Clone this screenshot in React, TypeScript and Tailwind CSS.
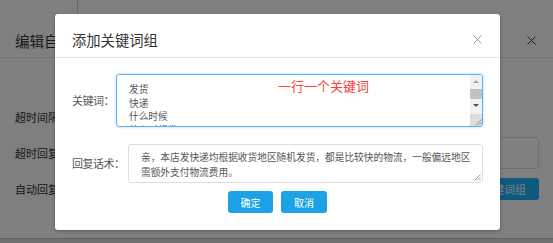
import { ReactNode } from "react";

const KEYWORDS = ["发货", "快递", "什么时候", "什么时候发"];

function Cross({ color }: { color: string }) {
  return (
    <svg width="9" height="9" viewBox="0 0 9 9" className="block">
      <path d="M0.5 0.5 L8.5 8.5 M8.5 0.5 L0.5 8.5" stroke={color} strokeWidth="1" fill="none" />
    </svg>
  );
}

function Grip() {
  return (
    <svg width="8" height="8" viewBox="0 0 8 8" className="block">
      <path d="M7.5 1.5 L1.5 7.5 M7.5 4 L4 7.5 M7.5 6.5 L6.5 7.5" stroke="#8a8a8a" strokeWidth="0.8" fill="none" />
    </svg>
  );
}

function FormRow({ label, children, className = "" }: { label: string; children?: ReactNode; className?: string }) {
  return (
    <div className={`flex items-center pl-[15px] pr-[14px] ${className}`}>
      <span className="text-[11px] text-[#333] whitespace-nowrap">{label}</span>
      {children}
    </div>
  );
}

export default function App() {
  return (
    <div className="relative w-[553px] h-[243px] overflow-hidden bg-white font-['Noto_Sans_CJK_SC','Liberation_Sans',sans-serif] flex flex-col">
      {/* page behind the dialog */}
      <div className="h-[14px] flex shrink-0">
        <div className="w-[78px] border-r border-[#d0d0d0]" />
      </div>
      <div className="h-[225px] shrink-0 border-b border-[#c4c4c4] flex flex-col">
        <div className="h-[44px] border-b border-[#e5e5e5] flex items-center justify-between pt-[10px] pl-[15px] pr-[17px]">
          <span className="text-[14.5px] text-[#333] whitespace-nowrap">编辑自动回复</span>
          <Cross color="#444" />
        </div>
        <FormRow label="超时间隔" className="h-[18px] mt-[50px]" />
        <FormRow label="超时回复" className="h-[32px] mt-[11px]">
          <div className="ml-auto w-[200px] h-[32px] border border-[#ddd] rounded-[3px]" />
        </FormRow>
        <FormRow label="自动回复" className="h-[22px] mt-[9px]">
          <div className="ml-auto h-[22px] px-[13px] rounded-[3px] bg-[#1ab4ff] text-white text-[11px] flex items-center">
            添加关键词组
          </div>
        </FormRow>
      </div>
      <div className="flex-1 bg-[#dedede]" />

      {/* backdrop */}
      <div className="absolute inset-0 bg-black/50" />

      {/* dialog */}
      <div className="absolute left-[55px] top-[14px] w-[445px] h-[216px] bg-white rounded-[3px] shadow-[0_1px_3px_rgba(0,0,0,0.3)] flex flex-col">
        <div className="h-[44px] shrink-0 border-b border-[#e5e5e5] flex items-center justify-between pt-[8px] pl-[17px] pr-[18px]">
          <span className="text-[14.3px] text-[#333] whitespace-nowrap">添加关键词组</span>
          <Cross color="#9a9a9a" />
        </div>

        <div className="flex flex-col pt-[16px] pl-[17px]">
          <div className="flex items-center">
            <span className="w-[44px] text-[11px] tracking-[-0.5px] text-[#555] whitespace-nowrap">关键词：</span>
            <div className="relative w-[367px] h-[53px] border border-[#66afe9] rounded-[3px] shadow-[0_0_3px_rgba(102,175,233,0.6)] flex overflow-hidden">
              <div className="flex-1 pl-[12px] pt-[8px] text-[9.7px] leading-[13.5px] text-[#555]">
                {KEYWORDS.map((k) => (
                  <div key={k} className="whitespace-nowrap">{k}</div>
                ))}
              </div>
              <div className="w-[12px] bg-[#f1f1f1] flex flex-col">
                <div className="h-[12px] flex items-center justify-center">
                  <div className="w-0 h-0 border-l-[3px] border-r-[3px] border-b-[3px] border-l-transparent border-r-transparent border-b-[#a3a3a3]" />
                </div>
                <div className="h-[10px] mt-[2px] bg-[#c1c1c1]" />
                <div className="h-[12px] flex items-center justify-center">
                  <div className="w-0 h-0 border-l-[3px] border-r-[3px] border-t-[3px] border-l-transparent border-r-transparent border-t-[#505050]" />
                </div>
                <div className="flex-1" />
                <div className="h-[12px] bg-[#dcdcdc] flex items-end justify-end">
                  <Grip />
                </div>
              </div>
              <span className="absolute left-[161px] top-[3px] text-[13px] leading-[15px] text-[#ff3b3b] whitespace-nowrap">
                一行一个关键词
              </span>
            </div>
          </div>

          <div className="flex items-center mt-[17px]">
            <span className="w-[56px] text-[11px] tracking-[-0.5px] text-[#555] whitespace-nowrap">回复话术：</span>
            <div className="relative w-[355px] h-[39px] border border-[#ddd] rounded-[3px] pl-[12px] pt-[5px] text-[9.7px] leading-[15px] text-[#555] whitespace-nowrap">
              亲，本店发快递均根据收货地区随机发货，都是比较快的物流，一般偏远地区
              <br />
              需额外支付物流费用。
              <div className="absolute right-[1px] bottom-[1px]">
                <Grip />
              </div>
            </div>
          </div>
        </div>

        <div className="flex justify-center gap-[8px] mt-[8px]">
          <button className="w-[45px] h-[22px] rounded-[3px] bg-[#1ba3e5] text-white text-[10px]">确定</button>
          <button className="w-[46px] h-[22px] rounded-[3px] bg-[#1ba3e5] text-white text-[10px]">取消</button>
        </div>
      </div>
    </div>
  );
}
